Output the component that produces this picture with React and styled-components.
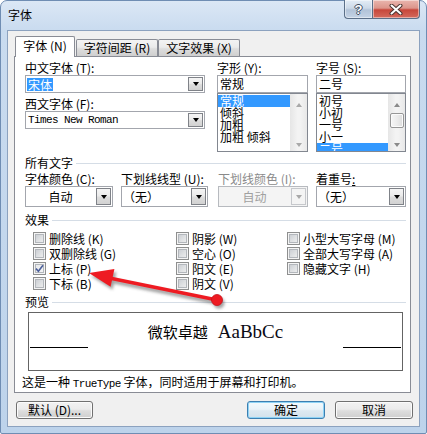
import React from "react";
import styled, { createGlobalStyle } from "styled-components";

const UI = `"Noto Sans CJK SC", "Noto Sans", sans-serif`;
const MONO = `"Liberation Mono", "DejaVu Sans Mono", monospace`;

const Global = createGlobalStyle`
  * { box-sizing: border-box; }
  html, body { margin: 0; padding: 0; background: #fff; }
  body { font-family: ${UI}; font-size: 12px; line-height: 12px; color: #000; }
`;

const Stage = styled.div`
  position: relative;
  width: 427px;
  height: 434px;
  overflow: hidden;
`;

const Window = styled.div`
  width: 427px;
  height: 434px;
  border: 1px solid #6f8db3;
  border-radius: 7px 7px 2px 2px;
  background: linear-gradient(180deg, #dbe7f5 0px, #c9dbef 30px, #bdd3eb 100%);
  display: flex;
  flex-direction: column;
`;

const TitleBar = styled.div`
  height: 29px;
  flex: none;
  display: flex;
  align-items: flex-start;
  padding-left: 7px;
`;

const Title = styled.div`
  margin-top: 8px;
  font-size: 12px;
  line-height: 12px;
`;

const Captions = styled.div`
  margin-left: auto;
  margin-top: -1px;
  margin-right: 6px;
  display: flex;
`;

const CapButton = styled.div`
  width: ${(p) => p.$w}px;
  height: 19px;
  display: flex;
  align-items: center;
  justify-content: center;
  border: 1px solid #5b6f88;
  border-top: none;
  border-radius: ${(p) => (p.$kind === "close" ? "0 0 4px 0" : "0 0 0 4px")};
  border-right: ${(p) => (p.$kind === "close" ? "1px solid #5b6f88" : "none")};
  background: ${(p) =>
    p.$kind === "close"
      ? "linear-gradient(180deg, #eab6ae 0%, #dc958b 45%, #c7473b 55%, #d46a5d 100%)"
      : "linear-gradient(180deg, #e3ecf6 0%, #ccd9e8 45%, #b2c3d8 55%, #c4d3e5 100%)"};
  box-shadow: inset 0 0 0 1px rgba(255, 255, 255, 0.45);
`;

const HelpGlyph = styled.span`
  font-family: "Liberation Sans", sans-serif;
  font-weight: bold;
  font-size: 13px;
  line-height: 13px;
  color: #fff;
  text-shadow: -1px 0 #3d4c60, 1px 0 #3d4c60, 0 -1px #3d4c60, 0 1px #3d4c60;
`;

const Body = styled.div`
  margin: 0 6px 6px 6px;
  flex: 1;
  border: 1px solid #8ca2bf;
  background: #f0f0f0;
  padding: 5px 8px 0 6px;
  display: flex;
  flex-direction: column;
`;

const TabStrip = styled.div`
  height: 20px;
  display: flex;
  align-items: flex-end;
  padding-left: 1px;
  position: relative;
  z-index: 1;
`;

const Tab = styled.div`
  width: ${(p) => (p.$active ? 60 : p.$w)}px;
  height: ${(p) => (p.$active ? 21 : 17)}px;
  margin-bottom: ${(p) => (p.$active ? -1 : 0)}px;
  margin-left: ${(p) => p.$ml || 0}px;
  border: 1px solid #898c95;
  border-bottom: none;
  border-radius: 2px 2px 0 0;
  background: ${(p) =>
    p.$active
      ? "#ffffff"
      : "linear-gradient(180deg, #f3f3f3 0%, #ebebeb 45%, #dddddd 55%, #cfcfcf 100%)"};
  display: flex;
  align-items: center;
  justify-content: center;
  padding-bottom: ${(p) => (p.$active ? 2 : 0)}px;
  white-space: nowrap;
`;

const Panel = styled.div`
  height: 337px;
  flex: none;
  border: 1px solid #898c95;
  background: #ffffff;
  padding: 5px 4px 0 10px;
  display: flex;
  flex-direction: column;
`;

const Row = styled.div`
  display: flex;
  margin-top: ${(p) => p.$mt || 0}px;
`;

const Col = styled.div`
  width: ${(p) => p.$w}px;
  margin-left: ${(p) => p.$ml || 0}px;
  display: flex;
  flex-direction: column;
`;

const Label = styled.div`
  height: 12px;
  line-height: 12px;
  white-space: nowrap;
  margin-top: ${(p) => p.$mt || 0}px;
  color: ${(p) => (p.$disabled ? "#8a8a8a" : "#000")};
`;

const Under = styled.span`
  text-decoration: underline;
`;

const Combo = styled.div`
  height: ${(p) => p.$h}px;
  margin-top: 1px;
  border: 1px solid ${(p) => (p.$disabled ? "#b7babf" : "#a3a6ad")};
  background: ${(p) => (p.$disabled ? "#f4f4f4" : "#ffffff")};
  display: flex;
  align-items: stretch;
`;

const ComboText = styled.div`
  flex: 1;
  display: flex;
  align-items: center;
  justify-content: ${(p) => (p.$center ? "center" : "flex-start")};
  padding-left: ${(p) => (p.$center ? 0 : p.$pl ?? 2)}px;
  color: ${(p) => (p.$disabled ? "#a0a0a0" : "#000")};
  white-space: nowrap;
`;

const Selected = styled.span`
  background: #3399ff;
  color: #fff;
  padding: 0 1px;
  line-height: 13px;
`;

const Mono = styled.span`
  font-family: ${MONO};
  font-size: 11px;
  letter-spacing: -0.6px;
`;

const DropBtn = styled.div`
  width: 15px;
  flex: none;
  margin: 1px;
  border: 1px solid ${(p) => (p.$disabled ? "#c6c8cc" : "#7f8288")};
  background: ${(p) =>
    p.$disabled
      ? "#f4f4f4"
      : "linear-gradient(180deg, #f5f5f5 0%, #ebebeb 45%, #dcdcdc 55%, #d2d2d2 100%)"};
  display: flex;
  align-items: center;
  justify-content: center;
`;

const Tri = styled.span`
  width: 0;
  height: 0;
  border-left: 3.5px solid transparent;
  border-right: 3.5px solid transparent;
  ${(p) => (p.$up ? "border-bottom" : "border-top")}: 4px solid ${(p) => p.$color || "#000"};
`;

const TextBox = styled.div`
  height: 18px;
  margin-top: 1px;
  border: 1px solid #a3a6ad;
  background: #fff;
  display: flex;
  align-items: center;
  padding-left: 2px;
`;

const ListBox = styled.div`
  height: 59px;
  border: 1px solid #828790;
  background: #fff;
  display: flex;
  overflow: hidden;
`;

const Items = styled.div`
  flex: 1;
  padding-top: 1px;
  display: flex;
  flex-direction: column;
`;

const Item = styled.div`
  height: 12px;
  flex: none;
  line-height: 12px;
  padding-left: 2px;
  white-space: nowrap;
  background: ${(p) => (p.$sel ? "#3399ff" : "transparent")};
  color: ${(p) => (p.$sel ? "#fff" : "#000")};
`;

const ScrollBar = styled.div`
  width: 17px;
  flex: none;
  display: flex;
  flex-direction: column;
  align-items: center;
  padding: 9px 0 4px;
  background: linear-gradient(90deg, #e6e6e6 0%, #f3f3f3 45%, #f3f3f3 60%, #e8e8e8 100%);
`;

const Thumb = styled.div`
  width: 14px;
  height: 15px;
  margin-top: 6px;
  border: 1px solid #979797;
  border-radius: 2px;
  background: linear-gradient(90deg, #f6f6f6 0%, #ececec 50%, #dcdcdc 100%);
  box-shadow: inset 0 0 0 1px #fbfbfb;
`;

const Spacer = styled.div`
  flex: 1;
`;

const SectionHead = styled.div`
  height: 12px;
  margin-top: ${(p) => p.$mt}px;
  display: flex;
  align-items: center;
`;

const SectionLine = styled.div`
  flex: 1;
  height: 1px;
  margin-left: 3px;
  background: #d5dde6;
`;

const Effects = styled.div`
  margin-top: 6px;
  padding-left: 8px;
  display: grid;
  grid-template-columns: 143px 111px 1fr;
  grid-template-rows: repeat(4, 15px);
  grid-auto-flow: column;
`;

const CheckRow = styled.div`
  display: flex;
  align-items: flex-start;
`;

const Box = styled.span`
  width: 13px;
  height: 13px;
  flex: none;
  border: 1px solid #8e8f8f;
  display: flex;
  align-items: center;
  justify-content: center;
  background: ${(p) =>
    p.$checked
      ? "linear-gradient(135deg, #e4e6e9 0%, #f7f7f7 100%)"
      : "linear-gradient(135deg, #c3c7cd 0%, #dfe1e3 55%, #f3f3f3 100%)"};
  box-shadow: inset 0 0 0 1px #f4f4f4, inset 0 0 0 2px #b3b7bc;
`;

const CheckLabel = styled.span`
  margin-left: 3px;
  line-height: 13px;
  white-space: nowrap;
`;

const PreviewBox = styled.div`
  margin-top: 4px;
  margin-left: 3px;
  width: 375px;
  height: 59px;
  border: 1px solid #646464;
  background: #fff;
  display: flex;
  align-items: flex-start;
`;

const Rule = styled.div`
  width: 58px;
  flex: none;
  margin: 34px 1px 0;
  border-top: 1px solid #000;
`;

const PreviewText = styled.div`
  flex: 1;
  padding-top: 9px;
  display: flex;
  justify-content: center;
  align-items: baseline;
`;

const PreviewCJK = styled.span`
  font-size: 15px;
  line-height: 19px;
`;

const PreviewLatin = styled.span`
  font-family: "Liberation Serif", serif;
  font-size: 19px;
  line-height: 19px;
  margin-left: 10px;
  color: #0a0a14;
`;

const Note = styled.div`
  margin-top: 5px;
  margin-left: -3px;
  height: 12px;
  line-height: 12px;
  white-space: nowrap;
`;

const ButtonRow = styled.div`
  margin: 8px -2px 0 2px;
  display: flex;
  align-items: center;
`;

const Btn = styled.div`
  width: ${(p) => p.$w}px;
  height: 18px;
  margin-left: ${(p) => (p.$auto ? "auto" : `${p.$ml || 0}px`)};
  border-radius: 3px;
  border: 1px solid ${(p) => (p.$default ? "#3c7fb1" : "#707070")};
  background: ${(p) =>
    p.$default
      ? "linear-gradient(180deg, #f4fafd 0%, #eaf3f9 45%, #dde9f1 55%, #d2e1eb 100%)"
      : "linear-gradient(180deg, #f2f2f2 0%, #ebebeb 45%, #dddddd 55%, #cfcfcf 100%)"};
  box-shadow: inset 0 0 0 1px ${(p) => (p.$default ? "#8fd3f5" : "#fbfbfb")};
  display: flex;
  align-items: center;
  justify-content: center;
  line-height: 12px;
  white-space: nowrap;
`;

const Overlay = styled.svg`
  position: absolute;
  left: 0;
  top: 0;
  pointer-events: none;
`;

function CloseIcon() {
  return (
    <svg width="14" height="11" viewBox="0 0 14 11">
      <path d="M2.5 1.5 L11.5 9.5 M11.5 1.5 L2.5 9.5" stroke="#4a3430" strokeWidth="4" strokeLinecap="round" fill="none" />
      <path d="M2.5 1.5 L11.5 9.5 M11.5 1.5 L2.5 9.5" stroke="#ffffff" strokeWidth="2" strokeLinecap="round" fill="none" />
    </svg>
  );
}

function Check() {
  return (
    <svg width="9" height="9" viewBox="0 0 9 9">
      <path d="M1 4.6 L3.4 7.2 L8 1.2" stroke="#4b5f9a" strokeWidth="1.6" fill="none" />
    </svg>
  );
}

function Checkbox({ checked, children }) {
  return (
    <CheckRow>
      <Box $checked={checked}>{checked && <Check />}</Box>
      <CheckLabel>{children}</CheckLabel>
    </CheckRow>
  );
}

function DropCombo({ h, children, center, disabled, pl }) {
  return (
    <Combo $h={h} $disabled={disabled}>
      <ComboText $center={center} $disabled={disabled} $pl={pl}>
        {children}
      </ComboText>
      <DropBtn $disabled={disabled}>
        <Tri $color={disabled ? "#a8a8a8" : "#000"} />
      </DropBtn>
    </Combo>
  );
}

function Arrow() {
  const tip = "89,273 114.4,269.1 110.6,286.7";
  return (
    <Overlay width="427" height="434" viewBox="0 0 427 434">
      <defs>
        <filter id="sh" x="-20%" y="-60%" width="140%" height="220%">
          <feGaussianBlur stdDeviation="1.6" />
        </filter>
      </defs>
      <g transform="translate(2,3)" opacity="0.5" filter="url(#sh)">
        <line x1="108" y1="277.8" x2="217" y2="300" stroke="#444" strokeWidth="4" />
        <polygon points={tip} fill="#444" />
        <circle cx="217" cy="300" r="5.5" fill="#444" />
      </g>
      <line x1="108" y1="277.8" x2="217" y2="300" stroke="#ee1b22" strokeWidth="3.6" />
      <polygon points={tip} fill="#ee1b22" />
      <circle cx="217" cy="300" r="5.5" fill="#ee1b22" stroke="#c8111a" strokeWidth="0.8" />
    </Overlay>
  );
}

export default function App() {
  return (
    <Stage>
      <Global />
      <Window>
        <TitleBar>
          <Title>字体</Title>
          <Captions>
            <CapButton $w={28} $kind="help">
              <HelpGlyph>?</HelpGlyph>
            </CapButton>
            <CapButton $w={48} $kind="close">
              <CloseIcon />
            </CapButton>
          </Captions>
        </TitleBar>
        <Body>
          <TabStrip>
            <Tab $active>字体 (N)</Tab>
            <Tab $w={82} $ml={1}>字符间距 (R)</Tab>
            <Tab $w={82}>文字效果 (X)</Tab>
          </TabStrip>
          <Panel>
            <Row>
              <Col $w={180}>
                <Label>中文字体 (T):</Label>
                <DropCombo h={18} pl={1}>
                  <Selected>宋体</Selected>
                </DropCombo>
                <Label $mt={5}>西文字体 (F):</Label>
                <DropCombo h={18}>
                  <Mono>Times New Roman</Mono>
                </DropCombo>
              </Col>
              <Col $w={91} $ml={12}>
                <Label>字形 (Y):</Label>
                <TextBox>常规</TextBox>
                <ListBox>
                  <Items>
                    <Item $sel>常规</Item>
                    <Item>倾斜</Item>
                    <Item>加粗</Item>
                    <Item>加粗 倾斜</Item>
                  </Items>
                  <ScrollBar>
                    <Tri $up $color="#a9a9a9" />
                    <Spacer />
                    <Tri $color="#a9a9a9" />
                  </ScrollBar>
                </ListBox>
              </Col>
              <Col $w={90} $ml={8}>
                <Label>字号 (S):</Label>
                <TextBox>二号</TextBox>
                <ListBox>
                  <Items>
                    <Item>初号</Item>
                    <Item>小初</Item>
                    <Item>一号</Item>
                    <Item>小一</Item>
                    <Item $sel>二号</Item>
                  </Items>
                  <ScrollBar>
                    <Tri $up $color="#8a8a8a" />
                    <Thumb />
                    <Spacer />
                    <Tri $color="#8a8a8a" />
                  </ScrollBar>
                </ListBox>
              </Col>
            </Row>

            <SectionHead $mt={5}>
              所有文字
              <SectionLine />
            </SectionHead>
            <Row $mt={4}>
              <Col $w={88}>
                <Label>字体颜色 (C):</Label>
                <DropCombo h={21} center>
                  自动
                </DropCombo>
              </Col>
              <Col $w={87} $ml={8}>
                <Label>下划线线型 (U):</Label>
                <DropCombo h={21} pl={1}>
                  （无）
                </DropCombo>
              </Col>
              <Col $w={90} $ml={10}>
                <Label $disabled>下划线颜色 (I):</Label>
                <DropCombo h={21} center disabled>
                  自动
                </DropCombo>
              </Col>
              <Col $w={90} $ml={8}>
                <Label>
                  着重号<Under>:</Under>
                </Label>
                <DropCombo h={21} pl={1}>
                  （无）
                </DropCombo>
              </Col>
            </Row>

            <SectionHead $mt={7}>
              效果
              <SectionLine />
            </SectionHead>
            <Effects>
              <Checkbox>删除线 (K)</Checkbox>
              <Checkbox>双删除线 (G)</Checkbox>
              <Checkbox checked>上标 (P)</Checkbox>
              <Checkbox>下标 (B)</Checkbox>
              <Checkbox>阴影 (W)</Checkbox>
              <Checkbox>空心 (O)</Checkbox>
              <Checkbox>阳文 (E)</Checkbox>
              <Checkbox>阴文 (V)</Checkbox>
              <Checkbox>小型大写字母 (M)</Checkbox>
              <Checkbox>全部大写字母 (A)</Checkbox>
              <Checkbox>隐藏文字 (H)</Checkbox>
            </Effects>

            <SectionHead $mt={4}>
              预览
              <SectionLine />
            </SectionHead>
            <PreviewBox>
              <Rule />
              <PreviewText>
                <PreviewCJK>微软卓越</PreviewCJK>
                <PreviewLatin>AaBbCc</PreviewLatin>
              </PreviewText>
              <Rule />
            </PreviewBox>
            <Note>
              这是一种 <Mono>TrueType</Mono> 字体，同时适用于屏幕和打印机。
            </Note>
          </Panel>
          <ButtonRow>
            <Btn $w={77}>默认 (D)...</Btn>
            <Btn $w={78} $default $auto>
              确定
            </Btn>
            <Btn $w={78} $ml={10}>
              取消
            </Btn>
          </ButtonRow>
        </Body>
      </Window>
      <Arrow />
    </Stage>
  );
}
